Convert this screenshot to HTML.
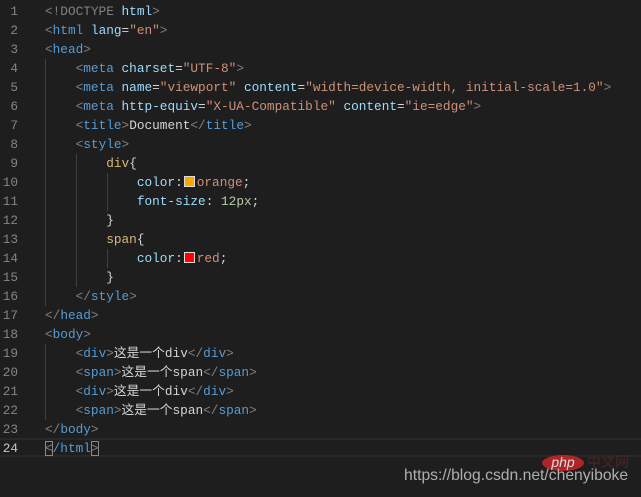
<!DOCTYPE html>
<html><head><style>
body{margin:0;width:641px;height:497px;background:#1e1e1e;overflow:hidden;position:relative;font-family:"Liberation Mono","Noto Sans CJK SC",monospace;font-size:12.75px;}
.l{position:absolute;left:0;height:19px;line-height:19px;white-space:pre;width:641px}
.n{position:absolute;left:0;width:18px;text-align:right;color:#858585}
.c{position:absolute;left:45px;color:#d4d4d4}
.b{color:#808080}.t{color:#569cd6}.a{color:#9cdcfe}.s{color:#ce9178}.se{color:#d7ba7d}.num{color:#b5cea8}
.g{position:absolute;width:1px;background:#404040}
.sw{display:inline-block;width:9px;height:9px;border:1px solid #ddd;margin:0 2px 0 1px;vertical-align:-1px}
</style></head><body>
<div style="position:absolute;left:0;top:438px;width:641px;height:19px;border-top:2px solid #282828;border-bottom:2px solid #282828;box-sizing:border-box"></div>
<div class="g" style="left:45px;top:59px;height:247px"></div>
<div class="g" style="left:76px;top:154px;height:133px"></div>
<div class="g" style="left:107px;top:173px;height:38px"></div>
<div class="g" style="left:107px;top:249px;height:19px"></div>
<div class="g" style="left:45px;top:344px;height:76px"></div>
<div class="l" style="top:2px"><span class="n">1</span><span class="c"><span class="b">&lt;!DOCTYPE</span> <span class="a">html</span><span class="b">&gt;</span></span></div>
<div class="l" style="top:21px"><span class="n">2</span><span class="c"><span class="b">&lt;</span><span class="t">html</span> <span class="a">lang</span>=<span class="s">"en"</span><span class="b">&gt;</span></span></div>
<div class="l" style="top:40px"><span class="n">3</span><span class="c"><span class="b">&lt;</span><span class="t">head</span><span class="b">&gt;</span></span></div>
<div class="l" style="top:59px"><span class="n">4</span><span class="c">    <span class="b">&lt;</span><span class="t">meta</span> <span class="a">charset</span>=<span class="s">"UTF-8"</span><span class="b">&gt;</span></span></div>
<div class="l" style="top:78px"><span class="n">5</span><span class="c">    <span class="b">&lt;</span><span class="t">meta</span> <span class="a">name</span>=<span class="s">"viewport"</span> <span class="a">content</span>=<span class="s">"width=device-width, initial-scale=1.0"</span><span class="b">&gt;</span></span></div>
<div class="l" style="top:97px"><span class="n">6</span><span class="c">    <span class="b">&lt;</span><span class="t">meta</span> <span class="a">http-equiv</span>=<span class="s">"X-UA-Compatible"</span> <span class="a">content</span>=<span class="s">"ie=edge"</span><span class="b">&gt;</span></span></div>
<div class="l" style="top:116px"><span class="n">7</span><span class="c">    <span class="b">&lt;</span><span class="t">title</span><span class="b">&gt;</span>Document<span class="b">&lt;/</span><span class="t">title</span><span class="b">&gt;</span></span></div>
<div class="l" style="top:135px"><span class="n">8</span><span class="c">    <span class="b">&lt;</span><span class="t">style</span><span class="b">&gt;</span></span></div>
<div class="l" style="top:154px"><span class="n">9</span><span class="c">        <span class="se">div</span>{</span></div>
<div class="l" style="top:173px"><span class="n">10</span><span class="c">            <span class="a">color</span>:<span class="sw" style="background:#ffa500"></span><span class="s">orange</span>;</span></div>
<div class="l" style="top:192px"><span class="n">11</span><span class="c">            <span class="a">font-size</span>: <span class="num">12px</span>;</span></div>
<div class="l" style="top:211px"><span class="n">12</span><span class="c">        }</span></div>
<div class="l" style="top:230px"><span class="n">13</span><span class="c">        <span class="se">span</span>{</span></div>
<div class="l" style="top:249px"><span class="n">14</span><span class="c">            <span class="a">color</span>:<span class="sw" style="background:#ff0000"></span><span class="s">red</span>;</span></div>
<div class="l" style="top:268px"><span class="n">15</span><span class="c">        }</span></div>
<div class="l" style="top:287px"><span class="n">16</span><span class="c">    <span class="b">&lt;/</span><span class="t">style</span><span class="b">&gt;</span></span></div>
<div class="l" style="top:306px"><span class="n">17</span><span class="c"><span class="b">&lt;/</span><span class="t">head</span><span class="b">&gt;</span></span></div>
<div class="l" style="top:325px"><span class="n">18</span><span class="c"><span class="b">&lt;</span><span class="t">body</span><span class="b">&gt;</span></span></div>
<div class="l" style="top:344px"><span class="n">19</span><span class="c">    <span class="b">&lt;</span><span class="t">div</span><span class="b">&gt;</span>这是一个div<span class="b">&lt;/</span><span class="t">div</span><span class="b">&gt;</span></span></div>
<div class="l" style="top:363px"><span class="n">20</span><span class="c">    <span class="b">&lt;</span><span class="t">span</span><span class="b">&gt;</span>这是一个span<span class="b">&lt;/</span><span class="t">span</span><span class="b">&gt;</span></span></div>
<div class="l" style="top:382px"><span class="n">21</span><span class="c">    <span class="b">&lt;</span><span class="t">div</span><span class="b">&gt;</span>这是一个div<span class="b">&lt;/</span><span class="t">div</span><span class="b">&gt;</span></span></div>
<div class="l" style="top:401px"><span class="n">22</span><span class="c">    <span class="b">&lt;</span><span class="t">span</span><span class="b">&gt;</span>这是一个span<span class="b">&lt;/</span><span class="t">span</span><span class="b">&gt;</span></span></div>
<div class="l" style="top:420px"><span class="n">23</span><span class="c"><span class="b">&lt;/</span><span class="t">body</span><span class="b">&gt;</span></span></div>
<div class="l" style="top:439px"><span class="n" style="color:#c6c6c6">24</span><span class="c"><span class="b" style="outline:1px solid #888;outline-offset:-1px">&lt;</span><span class="t">/html</span><span class="b" style="outline:1px solid #888;outline-offset:-1px">&gt;</span></span></div>
<div style="position:absolute;left:542px;top:455px;width:42px;height:16px;border-radius:50%;background:#c8262a;opacity:.85;color:#fff;font:italic 14px 'Liberation Sans',sans-serif;text-align:center;line-height:15px">php</div>
<div style="position:absolute;left:587px;top:454px;color:#4a2626;font:14px 'Noto Sans CJK SC',sans-serif;line-height:16px">中文网</div>
<div style="position:absolute;left:404px;top:466px;color:#c8c8c8;font:15.7px 'Liberation Sans',sans-serif;opacity:.85;line-height:20px">https://blog.csdn.net/chenyiboke</div>
</body></html>
